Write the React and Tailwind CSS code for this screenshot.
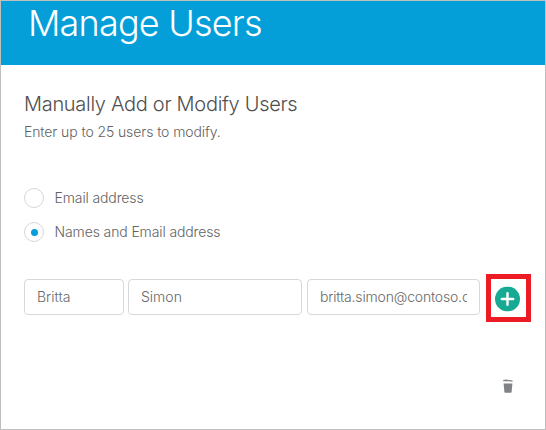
function Radio({ label, checked, className }) {
  return (
    <label className={`flex h-5 items-center ${className}`}>
      <span className="flex size-5 shrink-0 items-center justify-center rounded-full border border-[#d5d8da] bg-white">
        {checked && <span className="size-[7px] rounded-full bg-[#049fd9]" />}
      </span>
      <span className="ml-[10.5px] whitespace-nowrap text-[14px] font-light leading-5 tracking-[-0.12px] text-[#626262]">{label}</span>
    </label>
  );
}

function Field({ value, className }) {
  return (
    <div className={`h-9 shrink-0 rounded-[4px] border border-[#d8d8d8] bg-white px-3 ${className}`}>
      <div className="overflow-hidden whitespace-nowrap text-[14px] font-light leading-[34px] text-[#686868]">{value}</div>
    </div>
  );
}

export default function App() {
  return (
    <div className="flex h-[430px] w-[546px] flex-col overflow-hidden border border-[#bfbfbf] bg-white font-['Inter','Liberation_Sans',sans-serif]">
      <header className="h-16 shrink-0 bg-[#049fd9] pl-[27px]">
        <h1 className="whitespace-nowrap text-[36px] font-light leading-[44px] tracking-[-0.8px] text-white">Manage Users</h1>
      </header>
      <main className="flex flex-1 flex-col pl-[23px]">
        <h2 className="mt-[26px] whitespace-nowrap text-[20px] font-light leading-[26px] tracking-[-0.3px] text-[#4f4f4f]">
          Manually Add or Modify Users
        </h2>
        <p className="mt-[5px] whitespace-nowrap text-[14px] font-light leading-5 tracking-[-0.1px] text-[#626262]">Enter up to 25 users to modify.</p>
        <Radio label="Email address" className="mt-[46px]" />
        <Radio label="Names and Email address" checked className="mt-[14px]" />
        <div className="mt-8 flex h-12 items-start">
          <Field value="Britta" className="mt-[5px] w-[100px]" />
          <Field value="Simon" className="mt-[5px] ml-1 w-[174px]" />
          <Field value="britta.simon@contoso.com" className="mt-[5px] ml-[5px] w-[173px] tracking-[-0.18px]" />
          <button className="ml-[6px] flex h-12 w-[45px] items-center justify-center border-[5px] border-[#ed1c24] bg-white">
            <svg viewBox="0 0 25 25" className="size-[25px] translate-x-[-1px] translate-y-[0.5px]">
              <circle cx="12.5" cy="12.5" r="12.5" fill="#17a993" />
              <path d="M12.5 6.8v11.4M6.8 12.5h11.4" stroke="#fff" strokeWidth="2.4" strokeLinecap="round" />
            </svg>
          </button>
        </div>
        <div className="mt-[57px] flex pl-[479px]">
          <svg viewBox="0 0 10 14" className="h-[14px] w-[10px]" fill="#808285">
            <path d="M.2 2.2V.9L3 .5 9.6 1.6v1.2L6 2.2z" />
            <path d="M.6 4.6h8.8l-.8 8.5q-.1.7-.8.7H2.2q-.7 0-.8-.7z" />
          </svg>
        </div>
      </main>
    </div>
  );
}
